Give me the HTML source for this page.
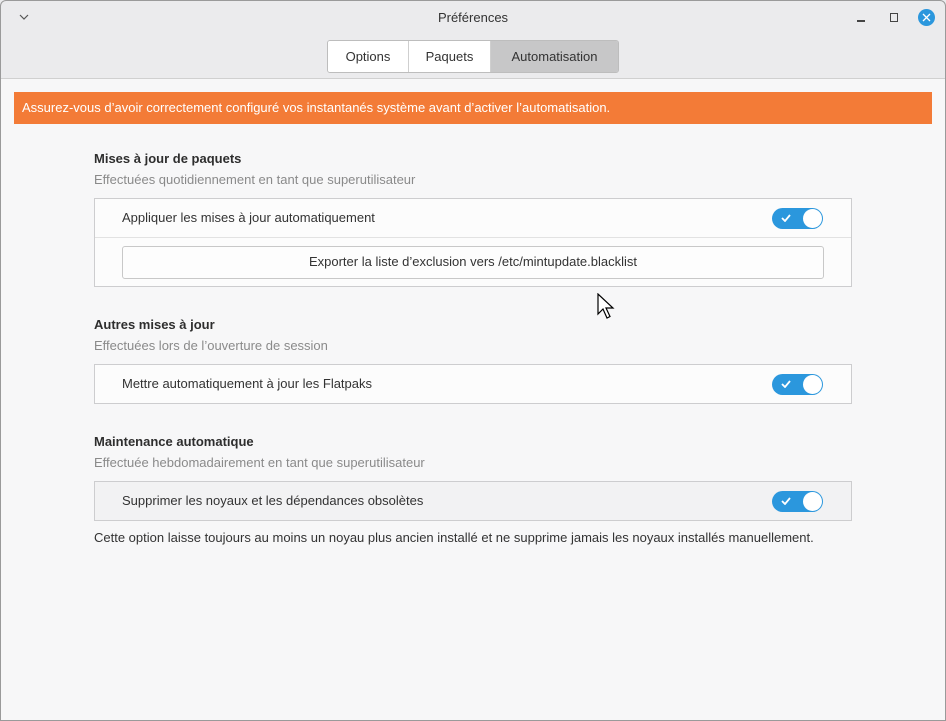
<!DOCTYPE html>
<html><head><meta charset="utf-8"><style>
*{box-sizing:border-box;margin:0;padding:0}
body{width:946px;height:721px;background:#f7f7f8;font-family:"Liberation Sans",sans-serif;font-size:13px;color:#333;position:relative;overflow:hidden}
.win{position:absolute;inset:0;overflow:hidden;background:#f7f7f8}
.frame{position:absolute;inset:0;border:1px solid #9a9a9a;border-radius:6px 6px 0 0;pointer-events:none;z-index:5}
.hdr{position:absolute;left:0;top:0;width:100%;height:79px;background:#ebebed;border-bottom:1px solid #d0d0d0}
.title{position:absolute;top:10px;width:100%;text-align:center;font-size:13px;color:#333}
.tabs{position:absolute;left:327px;top:40px;height:33px;display:flex;border:1px solid #bdbdbd;border-radius:3px;overflow:hidden}
.tabs div{text-align:center;line-height:31px;background:#fff;border-right:1px solid #cfcfcf}
.tabs div:last-child{background:#c7c7c8;border-right:none}
.banner{position:absolute;left:14px;top:92px;width:918px;height:32px;background:#f37b37;color:#fff;font-size:13px;line-height:31px;padding-left:8px}
.h{position:absolute;left:94px;font-weight:bold;font-size:13px;color:#2e2e2e}
.sub{position:absolute;left:94px;color:#8a8a8a;font-size:13px}
.box{position:absolute;left:94px;width:758px;border:1px solid #cdcdcf;background:#fcfcfc}
.row{height:39px;line-height:37px;padding-left:27px;position:relative}
.sw{position:absolute;right:28px;top:9px;width:51px;height:21px;border-radius:11px;background:#2b97dd}
.sw::after{content:"";position:absolute;right:1px;top:1px;width:19px;height:19px;border-radius:50%;background:#fff}
.sw svg{position:absolute;left:9px;top:6px}
.btn{position:absolute;left:27px;top:47px;width:702px;height:33px;border:1px solid #c8c8c8;border-radius:3px;background:#fdfdfd;text-align:center;line-height:30px}
</style></head><body><div class="win">
<div class="frame"></div>
<div class="hdr">
<svg style="position:absolute;left:19px;top:14px" width="10" height="7"><path d="M1 1l4 4 4-4" fill="none" stroke="#555" stroke-width="1.2"/></svg>
<div class="title">Préférences</div>
<div style="position:absolute;left:857px;top:20px;width:8px;height:1.5px;background:#444"></div>
<div style="position:absolute;left:890px;top:13px;width:8px;height:9px;border:1.3px solid #444"></div>
<div style="position:absolute;left:918px;top:9px;width:17px;height:17px;border-radius:50%;background:#2b97dd"></div>
<svg style="position:absolute;left:922px;top:13px" width="9" height="9"><path d="M1 1l7 7M8 1l-7 7" stroke="#fff" stroke-width="1.3"/></svg>
<div class="tabs"><div style="width:81px">Options</div><div style="width:82px">Paquets</div><div style="width:127px">Automatisation</div></div>
</div>
<div class="banner">Assurez-vous d’avoir correctement configuré vos instantanés système avant d’activer l’automatisation.</div>

<div class="h" style="top:151px">Mises à jour de paquets</div>
<div class="sub" style="top:172px">Effectuées quotidiennement en tant que superutilisateur</div>
<div class="box" style="top:198px;height:89px">
<div class="row" style="border-bottom:1px solid #e2e2e2">Appliquer les mises à jour automatiquement<div class="sw"><svg width="10" height="8"><path d="M1 4l3 3 5-6" fill="none" stroke="#fff" stroke-width="1.8"/></svg></div></div>
<div class="btn">Exporter la liste d’exclusion vers /etc/mintupdate.blacklist</div>
</div>

<div class="h" style="top:317px">Autres mises à jour</div>
<div class="sub" style="top:338px">Effectuées lors de l’ouverture de session</div>
<div class="box" style="top:364px;height:40px">
<div class="row">Mettre automatiquement à jour les Flatpaks<div class="sw"><svg width="10" height="8"><path d="M1 4l3 3 5-6" fill="none" stroke="#fff" stroke-width="1.8"/></svg></div></div>
</div>

<div class="h" style="top:434px">Maintenance automatique</div>
<div class="sub" style="top:455px">Effectuée hebdomadairement en tant que superutilisateur</div>
<div class="box" style="top:481px;height:40px;background:#f2f2f3">
<div class="row">Supprimer les noyaux et les dépendances obsolètes<div class="sw"><svg width="10" height="8"><path d="M1 4l3 3 5-6" fill="none" stroke="#fff" stroke-width="1.8"/></svg></div></div>
</div>
<div style="position:absolute;left:94px;top:530px">Cette option laisse toujours au moins un noyau plus ancien installé et ne supprime jamais les noyaux installés manuellement.</div>

<svg style="position:absolute;left:597px;top:293px" width="18" height="28"><path d="M1 1v20l5-5 4 9 3-1.5-4-8.5h7z" fill="#fff" stroke="#000" stroke-width="1.2"/></svg>
</div></body></html>
